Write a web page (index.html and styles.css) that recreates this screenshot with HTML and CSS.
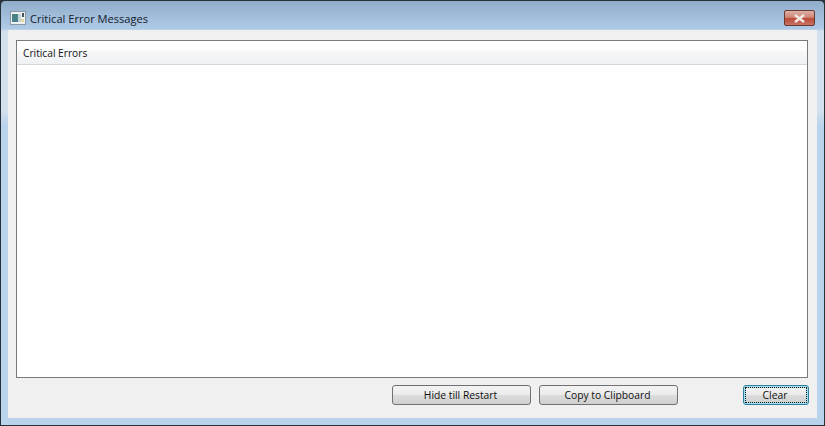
FILE: index.html
```html
<!DOCTYPE html>
<html lang="en">
<head>
    <meta charset="UTF-8">
    <meta name="viewport" content="width=device-width, initial-scale=1.0">
    <title>Critical Error Messages</title>
    <link rel="stylesheet" href="styles.css">
</head>
<body>
    <div class="window">
        <div class="title-bar">
            <svg class="app-icon" width="16" height="14" viewBox="0 0 16 14">
                <rect x="0.5" y="0.5" width="15" height="13" fill="#eef1f3" stroke="#8b99a6"/>
                <rect x="2" y="3" width="6" height="8" fill="#4a8288"/>
                <rect x="8" y="3" width="3" height="8" fill="#c3d8d6"/>
                <rect x="11" y="8" width="3" height="3" fill="#e2d79a"/>
                <rect x="12" y="2" width="2" height="4" fill="#4a535a"/>
            </svg>
            <span class="title-text">Critical Error Messages</span>
            <div class="close-btn">
                <svg width="13" height="9" viewBox="0 0 13 9">
                    <path d="M2 1 L11 8 M11 1 L2 8" stroke="#f2e6e2" stroke-width="2.6"/>
                </svg>
            </div>
        </div>
        <div class="client">
            <div class="panel">
                <div class="panel-header">Critical Errors</div>
                <div class="panel-body"></div>
            </div>
            <div class="button-row">
                <button class="btn btn-hide">Hide till Restart</button>
                <button class="btn btn-copy">Copy to Clipboard</button>
                <button class="btn btn-clear">Clear</button>
            </div>
        </div>
    </div>
</body>
</html>
```

FILE: styles.css
```css
html, body {
    margin: 0;
    padding: 0;
    height: 100%;
    overflow: hidden;
}
body {
    font-family: "Open Sans", Roboto, sans-serif;
    font-size: 10.2px;
    color: #111;
    background-color: #26323c;
}
.window {
    box-sizing: border-box;
    width: 825px;
    height: 426px;
    padding: 0 7px 7px 7px;
    border: 1px solid #27313a;
    border-radius: 5px 5px 0 0;
    background: linear-gradient(to bottom, #8fadc9 0, #afcae6 28px, #d3e1ee 30px, #d3e1ee 110px, #b9d3ec 125px, #b9d3ec 100%);
    display: flex;
    flex-direction: column;
}
.title-bar {
    box-sizing: border-box;
    height: 29px;
    flex: none;
    padding-top: 5px;
    display: flex;
    align-items: center;
}
.app-icon {
    margin-left: 2px;
    margin-right: 4px;
}
.title-text {
    font-size: 11.1px;
    color: #14202c;
}
.close-btn {
    box-sizing: border-box;
    margin-left: auto;
    margin-right: 2px;
    width: 31px;
    height: 16px;
    border: 1px solid #6a3a30;
    border-radius: 2px;
    background: linear-gradient(to bottom, #dcb0a4 0, #d08676 45%, #bb4a39 55%, #c97466 100%);
    display: flex;
    align-items: center;
    justify-content: center;
}
.client {
    flex: 1;
    display: flex;
    flex-direction: column;
    background-color: #f0f0f0;
    padding: 10px 9px 13px 8px;
    min-height: 0;
}
.panel {
    flex: 1;
    display: flex;
    flex-direction: column;
    border: 1px solid #7a7a7a;
    background-color: #fff;
}
.panel-header {
    box-sizing: border-box;
    height: 24px;
    line-height: 24px;
    padding: 0 0 0 6px;
    background: linear-gradient(to bottom, #fff 0, #fdfdfd 40%, #f6f7f8 45%, #f0f1f3 100%);
    border-bottom: 1px solid #d5d5d5;
}
.panel-body {
    flex: 1;
}
.button-row {
    display: flex;
    margin: 7px -1px 0 0;
    padding-left: 376px;
}
.btn {
    box-sizing: border-box;
    height: 20px;
    padding: 0 2px 0 0;
    font-family: inherit;
    font-size: 10.3px;
    color: #111;
    border: 1px solid #707070;
    border-radius: 3px;
    background: linear-gradient(to bottom, #f3f3f3 0, #ebebeb 50%, #dcdcdc 52%, #cfcfcf 100%);
}
.btn-hide {
    width: 139px;
}
.btn-copy {
    width: 139px;
    margin-left: 8px;
}
.btn-clear {
    width: 66px;
    margin-left: auto;
    border-color: #2f7f9f;
    outline: 1px dotted #111;
    outline-offset: -3px;
    box-shadow: inset 0 0 0 2px #a5e0f2;
}
```
